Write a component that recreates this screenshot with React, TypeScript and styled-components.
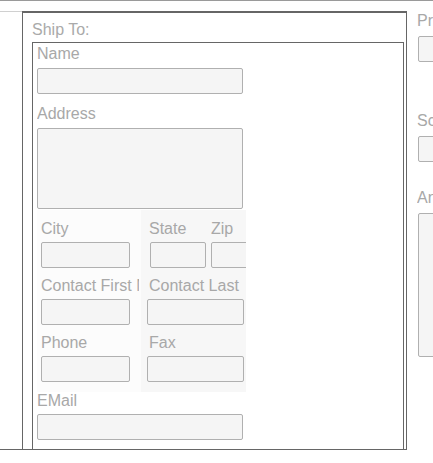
import React from "react";
import styled, { createGlobalStyle } from "styled-components";

const GlobalStyle = createGlobalStyle`
  html, body {
    margin: 0;
    padding: 0;
    overflow: hidden;
    background: #ffffff;
  }
  body {
    font-family: "Liberation Sans", Arial, sans-serif;
    font-size: 16px;
    color: #a8a8a8;
  }
`;

const Page = styled.div`
  width: 433px;
  height: 463px;
  overflow: hidden;
  background: #ffffff;
`;

const TopRule = styled.div`
  height: 1px;
  background: #9a9a9a;
  margin-bottom: 10px;
`;

const Row = styled.div`
  display: flex;
  align-items: flex-start;
`;

const Gutter = styled.div`
  flex: 0 0 22px;
  height: 439px;
  box-sizing: border-box;
  border-top: 1px solid #d0d0d0;
  border-bottom: 1px solid #666666;
`;

const ShipBox = styled.div`
  flex: 0 0 385px;
  height: 439px;
  box-sizing: border-box;
  border: 1px solid #666666;
  border-top-width: 2px;
  padding: 8px 2px 0 9px;
  display: flex;
  flex-direction: column;
  overflow: hidden;
`;

const Legend = styled.div`
  line-height: 18px;
  margin-bottom: 3px;
  color: #aaaaaa;
`;

const Inner = styled.div`
  flex: 1;
  border: 1px solid #666666;
  border-bottom: none;
  padding: 2px 0 0 4px;
  overflow: hidden;
`;

// labels are clipped by their column, like the original form
const Label = styled.div<{ $top?: number; $gap?: number; $indent?: number; $clip?: number }>`
  line-height: 18px;
  margin-top: ${(p) => p.$top ?? 0}px;
  margin-bottom: ${(p) => p.$gap ?? 4}px;
  padding-left: ${(p) => p.$indent ?? 0}px;
  max-width: ${(p) => (p.$clip ? `${p.$clip}px` : "none")};
  white-space: nowrap;
  overflow: hidden;
`;

const Field = styled.input<{ $w: number; $h?: number; $left?: number }>`
  display: block;
  box-sizing: border-box;
  width: ${(p) => p.$w}px;
  height: ${(p) => p.$h ?? 26}px;
  margin: 0 0 0 ${(p) => p.$left ?? 0}px;
  padding: 0;
  border: 1px solid #b0b0b0;
  border-radius: 2px;
  background: #f5f5f5;
  font: inherit;
  outline: none;
  flex-shrink: 0;
`;

const Area = styled.textarea<{ $w: number; $h: number; $left?: number }>`
  display: block;
  box-sizing: border-box;
  width: ${(p) => p.$w}px;
  height: ${(p) => p.$h}px;
  margin: 0 0 0 ${(p) => p.$left ?? 0}px;
  padding: 0;
  border: 1px solid #b0b0b0;
  border-radius: 2px;
  background: #f5f5f5;
  resize: none;
  font: inherit;
  outline: none;
  flex-shrink: 0;
`;

const Panel = styled.div`
  display: grid;
  grid-template-columns: 104px 105px;
  width: 209px;
  margin-top: 1px;
`;

const Cell = styled.div<{ $shade: string; $pad: number }>`
  background: ${(p) => p.$shade};
  padding: 10px 0 10px ${(p) => p.$pad}px;
  overflow: hidden;
`;

const Split = styled.div`
  display: flex;
`;

const SubField = styled.div<{ $w: number }>`
  flex: 0 0 ${(p) => p.$w}px;
  overflow: hidden;
`;

const Side = styled.div`
  flex: 0 0 200px;
  margin-left: 10px;
  padding-top: 1px;
  overflow: hidden;
`;

export default function App() {
  return (
    <Page>
      <GlobalStyle />
      <TopRule />
      <Row>
        <Gutter />
        <ShipBox>
          <Legend>Ship To:</Legend>
          <Inner>
            <Label $gap={5}>Name</Label>
            <Field $w={206} readOnly />
            <Label $top={11} $gap={5}>
              Address
            </Label>
            <Area $w={206} $h={81} readOnly />
            <Panel>
              <Cell $shade="#fcfcfc" $pad={4}>
                <Label>City</Label>
                <Field $w={89} readOnly />
                <Label $top={9} $clip={98}>
                  Contact First Name
                </Label>
                <Field $w={89} readOnly />
                <Label $top={9}>Phone</Label>
                <Field $w={89} readOnly />
              </Cell>
              <Cell $shade="#f7f7f7" $pad={6}>
                <Split>
                  <SubField $w={64}>
                    <Label $indent={2}>State</Label>
                    <Field $w={56} $left={3} readOnly />
                  </SubField>
                  <SubField $w={50}>
                    <Label>Zip</Label>
                    <Field $w={50} readOnly />
                  </SubField>
                </Split>
                <Label $top={9} $indent={2} $clip={94}>
                  Contact Last Name
                </Label>
                <Field $w={97} readOnly />
                <Label $top={9} $indent={2}>
                  Fax
                </Label>
                <Field $w={97} readOnly />
              </Cell>
            </Panel>
            <Label>EMail</Label>
            <Field $w={206} readOnly />
          </Inner>
        </ShipBox>
        <Side>
          <Label $gap={6}>Priority</Label>
          <Field $w={150} $left={1} readOnly />
          <Label $top={50} $gap={6}>
            Schedule
          </Label>
          <Field $w={150} $left={1} readOnly />
          <Label $top={27} $gap={6}>
            Annotations
          </Label>
          <Area $w={150} $h={144} $left={1} readOnly />
        </Side>
      </Row>
    </Page>
  );
}
